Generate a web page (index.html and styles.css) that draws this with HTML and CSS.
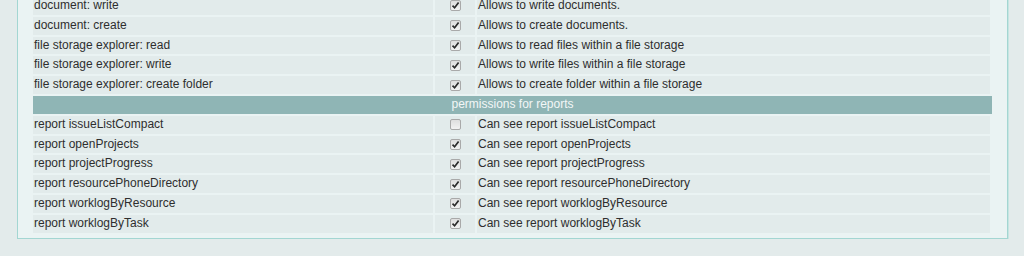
FILE: index.html
```html
<!doctype html>
<html lang="en">
    <head>
        <meta charset="UTF-8" />
        <title>Permissions</title>
        <link rel="stylesheet" href="styles.css">
    </head>
    <body>
        <div class="panel">
            <div class="perm-table">
                <div class="cell name">document: write</div>
                <div class="cell check"><span class="cb on"></span></div>
                <div class="cell desc">Allows to write documents.</div>

                <div class="cell name">document: create</div>
                <div class="cell check"><span class="cb on"></span></div>
                <div class="cell desc">Allows to create documents.</div>

                <div class="cell name">file storage explorer: read</div>
                <div class="cell check"><span class="cb on"></span></div>
                <div class="cell desc">Allows to read files within a file storage</div>

                <div class="cell name">file storage explorer: write</div>
                <div class="cell check"><span class="cb on"></span></div>
                <div class="cell desc">Allows to write files within a file storage</div>

                <div class="cell name">file storage explorer: create folder</div>
                <div class="cell check"><span class="cb on"></span></div>
                <div class="cell desc">Allows to create folder within a file storage</div>

                <div class="group">permissions for reports</div>

                <div class="cell name">report issueListCompact</div>
                <div class="cell check"><span class="cb"></span></div>
                <div class="cell desc">Can see report issueListCompact</div>

                <div class="cell name">report openProjects</div>
                <div class="cell check"><span class="cb on"></span></div>
                <div class="cell desc">Can see report openProjects</div>

                <div class="cell name">report projectProgress</div>
                <div class="cell check"><span class="cb on"></span></div>
                <div class="cell desc">Can see report projectProgress</div>

                <div class="cell name">report resourcePhoneDirectory</div>
                <div class="cell check"><span class="cb on"></span></div>
                <div class="cell desc">Can see report resourcePhoneDirectory</div>

                <div class="cell name">report worklogByResource</div>
                <div class="cell check"><span class="cb on"></span></div>
                <div class="cell desc">Can see report worklogByResource</div>

                <div class="cell name">report worklogByTask</div>
                <div class="cell check"><span class="cb on"></span></div>
                <div class="cell desc">Can see report worklogByTask</div>
            </div>
        </div>

        <script>
            // draw the check marks into the checked boxes
            document.querySelectorAll(".cb.on").forEach((box) => {
                box.innerHTML =
                    '<svg width="9" height="9" viewBox="0 0 9 9"><path d="M1.5 4.6 L3.6 6.8 L7.6 1.6" fill="none" stroke="#2b2b2b" stroke-width="1.7"/></svg>';
            });
        </script>
    </body>
</html>
```

FILE: styles.css
```css
body {
    margin: 0;
    background: #e3ebeb;
    font-family: "Liberation Sans", Arial, sans-serif;
    font-size: 12px;
    color: #2e2e2e;
}
.panel {
    margin: -30px 16px 0 17px;
    padding: 26px 17px 5px 15px;
    background: #eaf3f3;
    border: 1px solid #a3d6d2;
    box-shadow: 1px 1px 0 #c6e5e2;
}
.perm-table {
    display: grid;
    grid-template-columns: 400px 40px 1fr;
    grid-auto-rows: 17.8px;
    gap: 2px;
}
.cell {
    background: #e2ebeb;
    line-height: 17.8px;
    padding-left: 1px;
    white-space: nowrap;
}
.check {
    display: flex;
    align-items: center;
    justify-content: center;
    padding-left: 0;
}
.cb {
    box-sizing: border-box;
    width: 11px;
    height: 11px;
    border: 1px solid #a9a9a9;
    border-radius: 2px;
    background: linear-gradient(#dedede, #f2f2f2);
    display: flex;
    align-items: center;
    justify-content: center;
}
.group {
    grid-column: 1 / -1;
    margin-right: -2px;
    background: #8fb5b5;
    color: #f3f7f7;
    text-align: center;
    line-height: 17.8px;
}
```
